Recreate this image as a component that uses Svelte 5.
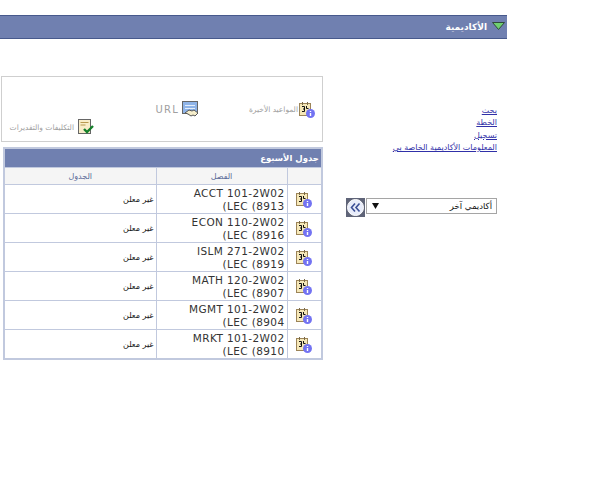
<script>
  const rows = [
    { code: 'ACCT 101-2W02', section: 'LEC (8913' },
    { code: 'ECON 110-2W02', section: 'LEC (8916' },
    { code: 'ISLM 271-2W02', section: 'LEC (8919' },
    { code: 'MATH 120-2W02', section: 'LEC (8907' },
    { code: 'MGMT 101-2W02', section: 'LEC (8904' },
    { code: 'MRKT 101-2W02', section: 'LEC (8910' }
  ];
  const links = ['بحث', 'الخطة', 'تسجيل', 'المعلومات الأكاديمية الخاصة بي'];
</script>

{#snippet calendarIcon()}
  <svg class="icon" width="16" height="17" viewBox="0 0 16 17">
    <rect x="0.500" y="2.500" width="11" height="12" fill="#f6e8b8" stroke="#9c8458" />
    <path d="M3.500 1v3M8.500 1v3" stroke="#7a6a48" fill="none" />
    <path d="M3 5.500h2.500v5H3M4 8h1.500M7.500 5v2.500h2" stroke="#111" fill="none" />
    <circle cx="11.500" cy="12.500" r="4.500" fill="#7373f2" />
    <path d="M11.500 10v1M11.500 12v3" stroke="#fff" stroke-width="1.400" fill="none" />
  </svg>
{/snippet}

<div class="page">
  <div class="band">
    <svg class="caret" width="13" height="8" viewBox="0 0 13 8">
      <path d="M0.500 0.500h12L6.500 7.500z" fill="#6fd070" stroke="#2f4a3a" />
    </svg>
    <span>الأكاديمية</span>
  </div>

  <div class="main">
    <div class="side">
      <nav class="links">
        {#each links as link}
          <a href="#top">{link}</a>
        {/each}
      </nav>
      <div class="picker">
        <div class="select">
          <span>أكاديمي آخر</span>
          <svg width="7" height="6" viewBox="0 0 7 6"><path d="M0 0h7L3.500 6z" fill="#111" /></svg>
        </div>
        <button class="go" aria-label="go">
          <svg width="19" height="19" viewBox="0 0 19 19">
            <rect width="19" height="19" fill="#5f6478" />
            <circle cx="9.500" cy="9.500" r="8" fill="#e8ecfa" stroke="#fff" />
            <path d="M9 5.500L5.500 9.500 9 13.500M13.500 5.500L10 9.500l3.500 4" fill="none" stroke="#3b4f96" stroke-width="1.600" />
          </svg>
        </button>
      </div>
    </div>

    <div class="content">
      <div class="menu">
        <div class="item first">
          {@render calendarIcon()}
          <span>المواعيد الأخيرة</span>
        </div>
        <div class="item second">
          <svg class="icon" width="17" height="16" viewBox="0 0 17 16">
            <rect x="0.500" y="0.500" width="15" height="12" fill="#8fb4e8" stroke="#666" />
            <path d="M3 4.500h10M3 7.500h10" stroke="#e4eefa" />
            <path d="M3 12l4-3 3 1 2-1 4 3-3 3-2-1-2 1-3-2z" fill="#f6eecb" stroke="#555" />
          </svg>
          <span class="url">URL</span>
        </div>
        <div class="item third">
          <svg class="icon" width="16" height="16" viewBox="0 0 16 16">
            <rect x="0.500" y="0.500" width="12" height="14" fill="#f8edc8" stroke="#666" />
            <path d="M2.500 3.500h8M2.500 6h5" stroke="#b89a50" />
            <path d="M6 10l3 3 6-6" fill="none" stroke="#14802a" stroke-width="2.400" />
          </svg>
          <span>التكليفات والتقديرات</span>
        </div>
      </div>

      <table class="grid">
        <colgroup>
          <col class="c-icon" />
          <col class="c-class" />
          <col />
        </colgroup>
        <thead>
          <tr><th class="title" colspan="3">جدول الأسبوع</th></tr>
          <tr class="heads">
            <th></th>
            <th>الفصل</th>
            <th>الجدول</th>
          </tr>
        </thead>
        <tbody>
          {#each rows as row}
            <tr>
              <td class="cal">{@render calendarIcon()}</td>
              <td class="course">{row.code}<br />{row.section}<span class="paren">)</span></td>
              <td class="plain">غير معلن</td>
            </tr>
          {/each}
        </tbody>
      </table>
    </div>
  </div>
</div>

<style>
  :global(body) {
    background: #fff;
  }
  .page {
    width: 507px;
    padding-top: 15px;
    direction: rtl;
    font-family: "DejaVu Sans", Verdana, sans-serif;
    font-size: 8px;
  }
  .band {
    height: 24px;
    box-sizing: border-box;
    background: #7080b0;
    border-top: 1px solid #47598c;
    border-bottom: 1px solid #47598c;
    display: flex;
    align-items: center;
    gap: 5px;
    padding-right: 2px;
    color: #fff;
    font-weight: bold;
    font-size: 9px;
  }
  .caret {
    margin-bottom: 3px;
  }
  .main {
    display: flex;
    margin-top: 37px;
  }
  .side {
    flex: 1;
    padding-right: 10px;
    padding-top: 29px;
  }
  .links {
    display: flex;
    flex-direction: column;
    align-items: flex-start;
    line-height: 12.300px;
  }
  .links a {
    color: #3030a8;
    text-decoration: underline;
  }
  .picker {
    display: flex;
    gap: 1px;
    margin-top: 44px;
  }
  .select {
    width: 131px;
    height: 16px;
    box-sizing: border-box;
    border: 1px solid #a5a5a5;
    display: flex;
    align-items: center;
    justify-content: space-between;
    padding: 0 4px 0 5px;
    font-size: 8.500px;
    color: #111;
  }
  .go {
    width: 19px;
    height: 19px;
    padding: 0;
    border: 0;
    background: none;
    display: block;
  }
  .go svg {
    display: block;
  }
  .content {
    width: 322px;
    margin-left: 1px;
  }
  .menu {
    box-sizing: border-box;
    height: 66px;
    border: 1px solid #cfcfcf;
    display: grid;
    grid-template-columns: 116px 105px 1fr;
    grid-template-rows: 18px 18px;
    padding: 23px 7px 0 0;
    color: #a0a0a0;
    font-size: 7.500px;
    white-space: nowrap;
  }
  .item {
    display: flex;
    align-items: center;
    gap: 1px;
  }
  .first {
    grid-column: 1;
    grid-row: 1;
  }
  .second {
    grid-column: 2;
    grid-row: 1;
    gap: 3px;
  }
  .third {
    grid-column: 3;
    grid-row: 2;
    gap: 4px;
  }
  .url {
    font-size: 10px;
    letter-spacing: 1.200px;
  }
  .icon {
    display: block;
    flex: none;
  }
  .grid {
    width: 320px;
    margin: 5px 0 0 0;
    border-collapse: collapse;
    table-layout: fixed;
    border: 2px solid #c1c9de;
  }
  .c-icon {
    width: 35px;
  }
  .c-class {
    width: 131px;
  }
  .title {
    height: 18px;
    padding: 0 2px;
    background: #7080b0;
    color: #fff;
    text-align: right;
    font-size: 8.500px;
    font-weight: bold;
  }
  .heads th {
    height: 16px;
    padding: 0;
    background: #f5f5f5;
    color: #5a6a98;
    font-weight: normal;
    text-align: center;
    border: 1px solid #c1c9de;
  }
  td {
    height: 28px;
    padding: 0 2px;
    border: 1px solid #c1c9de;
    color: #111;
    text-align: right;
  }
  .cal .icon {
    margin: 0 auto;
  }
  .course {
    height: 26px;
    padding-top: 2px;
    font-size: 10.500px;
    letter-spacing: 0.400px;
    line-height: 13px;
    color: #333;
  }
  .paren {
    unicode-bidi: isolate;
  }
</style>
